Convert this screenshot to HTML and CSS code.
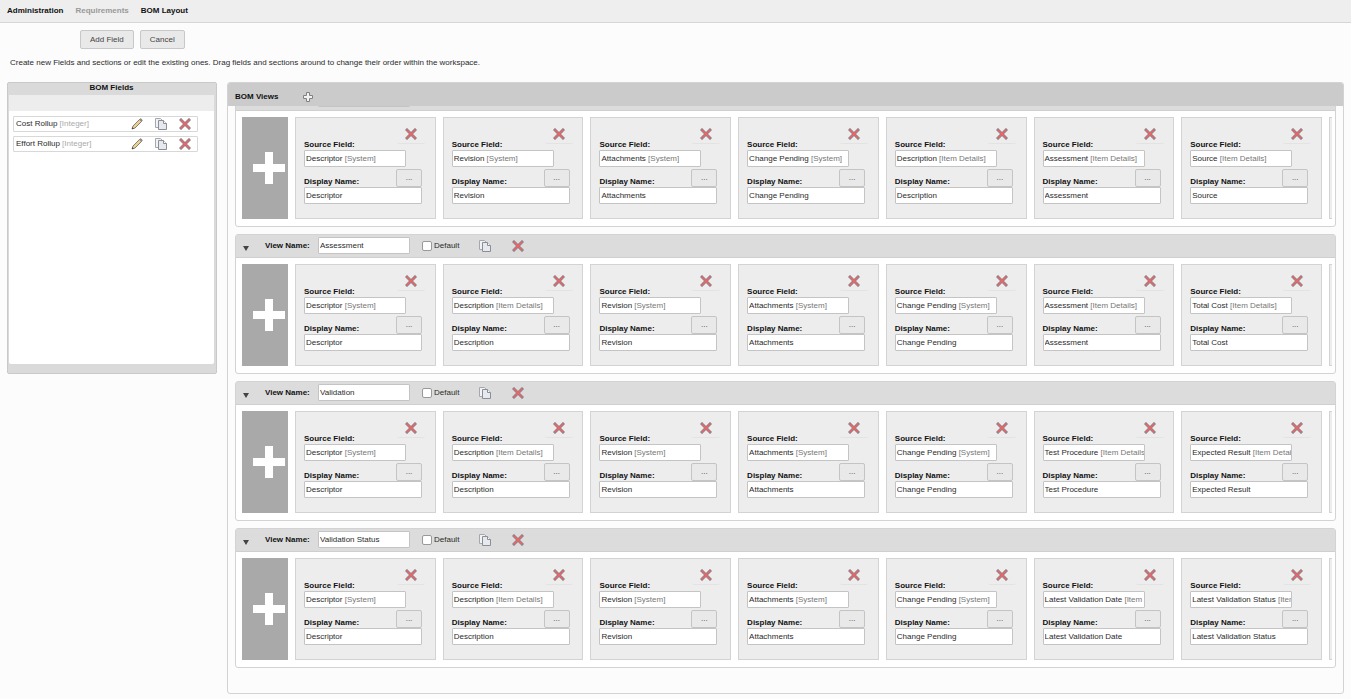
FILE: index.html
```html
<!DOCTYPE html>
<html lang="en">
<head>
    <meta charset="UTF-8">
    <meta name="viewport" content="width=device-width, initial-scale=1.0">
    <title>BOM Layout</title>
    <link rel="stylesheet" href="styles.css">
</head>

<body>
<svg class="icon-defs" aria-hidden="true">
    <symbol id="icon-delete" viewBox="0 0 12 12">
        <path d="M2 2L10 10M10 2L2 10" stroke="#85858b" stroke-width="3" stroke-linecap="square"/>
        <path d="M2 2L10 10M10 2L2 10" stroke="#ee6467" stroke-width="1.5" stroke-linecap="square"/>
    </symbol>
    <symbol id="icon-copy" viewBox="0 0 12 12">
        <path d="M0.5 0.5H5.5L7.5 2.5V9.5H0.5Z" fill="#f1f2f4" stroke="#a5a8ae"/>
        <path d="M3.5 2.5H8.5L11.5 5.5V11.5H3.5Z" fill="#e6e9ee" stroke="#8b8e96"/>
        <path d="M8.5 2.5V5.5H11.5" fill="#fff" stroke="#8b8e96"/>
    </symbol>
    <symbol id="icon-edit" viewBox="0 0 12 12">
        <path d="M1 11L2 8L8.8 1.2Q9.6 0.4 10.6 1.4Q11.6 2.4 10.8 3.2L4 10Z" fill="#ecd08e" stroke="#77736d" stroke-width="0.9"/>
        <path d="M8.2 1.8L10.2 3.8L10.9 3.1Q11.5 2.4 10.6 1.4Q9.6 0.5 8.9 1.1Z" fill="#8d8a92"/>
        <path d="M1 11L1.6 9.2L2.8 10.4Z" fill="#333"/>
    </symbol>
    <symbol id="icon-add" viewBox="0 0 12 12">
        <path d="M4.5 1.5H7.5V4.5H10.5V7.5H7.5V10.5H4.5V7.5H1.5V4.5H4.5Z" fill="#f2f2f2" stroke="#808080"/>
    </symbol>
</svg>

<nav class="breadcrumb">
    <a href="#">Administration</a>
    <a href="#" class="muted">Requirements</a>
    <a href="#">BOM Layout</a>
</nav>

<div class="actions">
    <button type="button" class="btn">Add Field</button>
    <button type="button" class="btn">Cancel</button>
</div>

<p class="hint">Create new Fields and sections or edit the existing ones. Drag fields and sections around to change their order within the workspace.</p>

<main class="workspace">
    <section class="fields-panel">
        <h2>BOM Fields</h2>
        <div class="fields-toolbar"></div>
        <ul class="fields-list" id="fields"></ul>
    </section>

    <section class="views-panel">
        <header class="views-header">
            <h2>BOM Views</h2>
            <button type="button" class="icon-btn" aria-label="Add view"><svg class="icon"><use href="#icon-add"/></svg></button>
        </header>
        <div class="views-list" id="views"></div>
    </section>
</main>

<script src="script.js"></script>
</body>
</html>
```
FILE: styles.css
```css
* {
    box-sizing: border-box;
    margin: 0;
    padding: 0;
}

body {
    background: #fcfcfc;
    color: #2b2b2b;
    font: 8px/10px "Liberation Sans", Arial, sans-serif;
}

h2 {
    font-size: 8px;
    line-height: 10px;
    color: #111;
}

button, input {
    font: inherit;
    color: inherit;
}

.icon-defs {
    position: absolute;
    width: 0;
    height: 0;
}

.icon {
    display: block;
    width: 12px;
    height: 12px;
    fill: none;
}

.breadcrumb {
    display: flex;
    align-items: center;
    gap: 12px;
    height: 23px;
    padding: 0 7px;
    background: #eee;
    border-bottom: 1px solid #d6d6d6;
}

.breadcrumb a {
    color: #111;
    font-weight: bold;
    text-decoration: none;
}

.breadcrumb .muted {
    color: #999;
}

.actions {
    display: flex;
    gap: 6px;
    padding: 7px 80px 0;
}

.btn {
    height: 19px;
    padding: 0 9px;
    background: #e9e9e9;
    border: 1px solid #c8c8c8;
    border-radius: 2px;
    color: #444;
}

.hint {
    padding: 9px 10px 14px;
}

.workspace {
    display: flex;
    align-items: flex-start;
    gap: 10px;
    padding: 0 7px;
}

.fields-panel {
    flex: none;
    width: 210px;
    padding: 0 2px 9px 1px;
    background: #dadada;
    border: 1px solid #c9c9c9;
    border-radius: 2px;
}

.fields-panel h2 {
    padding-bottom: 2px;
    text-align: center;
}

.fields-toolbar {
    height: 16px;
    background: #ededed;
}

.fields-list {
    height: 253px;
    padding: 5px 16px 0 4px;
    background: #fff;
    border-radius: 0 0 2px 2px;
    list-style: none;
}

.fields-list li {
    display: flex;
    align-items: center;
    gap: 12px;
    height: 16px;
    margin-bottom: 4px;
    padding: 0 6px 0 2px;
    border: 1px solid #d8d8d8;
    border-radius: 1px;
}

.field-name {
    flex: 1;
}

.field-name span {
    color: #aaa;
}

.views-panel {
    flex: 1;
    min-width: 0;
    display: flex;
    flex-direction: column;
    height: calc(100vh - 87px);
    border: 1px solid #d3d3d3;
    border-radius: 3px;
}

.views-header {
    display: flex;
    align-items: center;
    gap: 24px;
    height: 23px;
    padding: 4px 7px 0;
    background: #cbcbcb;
    border-radius: 2px 2px 0 0;
}

.icon-btn {
    background: none;
    border: none;
}

.views-list {
    flex: 1;
    min-height: 0;
    padding: 0 7px 26px;
    overflow-y: scroll;
    scrollbar-width: none;
}

.view {
    height: 140px;
    margin-bottom: 7px;
    background: #fff;
    border: 1px solid #d3d3d3;
    border-radius: 3px;
}

.view-header {
    display: flex;
    align-items: center;
    height: 23px;
    padding: 0 0 1px 7px;
    background: #dcdcdc;
    border-bottom: 1px solid #cfcfcf;
}

.toggle {
    width: 22px;
    height: 17px;
    padding-top: 6px;
    background: none;
    border: none;
}

.toggle::before {
    content: "";
    display: block;
    width: 0;
    border: 3px solid transparent;
    border-top: 5px solid #444;
    border-bottom: 0;
}

.view-name {
    flex: none;
    width: 53px;
    color: #111;
    font-weight: bold;
}

.text-input {
    height: 17px;
    padding: 0 1px;
    background: #fff;
    border: 1px solid #c4c4c4;
    border-radius: 1px;
}

.view-header .text-input {
    width: 92px;
}

.view-header input[type="checkbox"] {
    appearance: none;
    width: 10px;
    height: 10px;
    margin: 0 2px 0 12px;
    background: #fff;
    border: 1px solid #999;
    border-radius: 2px;
}

.default-label {
    width: 45px;
}

.view-header .icon-btn {
    margin: 1px 21px 0 0;
}

.view-body {
    display: flex;
    gap: 7px;
    height: 115px;
    margin-right: 3px;
    padding: 6px 0 7px 6px;
    overflow: hidden;
}

.add-column {
    flex: none;
    width: 46px;
    background: #a9a9a9;
    border: none;
}

.add-column svg {
    display: block;
    width: 32px;
    height: 32px;
    margin-left: 11px;
}

.columns {
    flex: 1;
    min-width: 0;
    display: grid;
    grid-auto-flow: column;
    grid-auto-columns: calc((100% - 52px) / 7);
    gap: 7px;
}

.column-card {
    padding-left: 8px;
    background: #ededed;
    border: 1px solid #d3d3d3;
}

.card-row {
    display: flex;
    justify-content: space-between;
    align-items: flex-end;
    width: 118px;
    height: 20px;
    color: #111;
    font-weight: bold;
}

.card-row.first {
    height: 32px;
}

.card-row .icon-btn {
    padding: 0 8px 3px;
    margin: 0 -3px 6px 0;
    border-bottom: 1px solid #e3e3e3;
    border-radius: 2px;
}

.source {
    width: 102px;
    height: 17px;
    padding: 0 1px;
    background: #fff;
    border: 1px solid #c4c4c4;
    border-radius: 1px;
    line-height: 16px;
    white-space: nowrap;
    overflow: hidden;
}

.source span {
    color: #777;
}

.more {
    width: 26px;
    height: 18px;
    background: #e9e9e9;
    border: 1px solid #c4c4c4;
    border-radius: 2px;
    color: #444;
    font-weight: normal;
}

.column-card .text-input {
    display: block;
    width: 118px;
}
```
FILE: script.js
```js
const fields = [
    ['Cost Rollup', 'Integer'],
    ['Effort Rollup', 'Integer']
];

const SYS = 'System';
const ITEM = 'Item Details';

const views = [
    {
        name: '',
        columns: [['Descriptor', SYS], ['Revision', SYS], ['Attachments', SYS], ['Change Pending', SYS], ['Description', ITEM], ['Assessment', ITEM], ['Source', ITEM]]
    },
    {
        name: 'Assessment',
        columns: [['Descriptor', SYS], ['Description', ITEM], ['Revision', SYS], ['Attachments', SYS], ['Change Pending', SYS], ['Assessment', ITEM], ['Total Cost', ITEM]]
    },
    {
        name: 'Validation',
        columns: [['Descriptor', SYS], ['Description', ITEM], ['Revision', SYS], ['Attachments', SYS], ['Change Pending', SYS], ['Test Procedure', ITEM], ['Expected Result', ITEM]]
    },
    {
        name: 'Validation Status',
        columns: [['Descriptor', SYS], ['Description', ITEM], ['Revision', SYS], ['Attachments', SYS], ['Change Pending', SYS], ['Latest Validation Date', ITEM], ['Latest Validation Status', ITEM]]
    }
];

const iconButton = (icon, label) =>
    `<button type="button" class="icon-btn" aria-label="${label}"><svg class="icon"><use href="#icon-${icon}"/></svg></button>`;

const columnCard = ([name, group], id) => `
    <div class="column-card">
        <div class="card-row first"><span>Source Field:</span>${iconButton('delete', 'Delete column')}</div>
        <div class="source">${name} <span>[${group}]</span></div>
        <div class="card-row"><label for="${id}">Display Name:</label><button type="button" class="more">...</button></div>
        <input type="text" class="text-input" id="${id}" value="${name}">
    </div>`;

const viewBlock = (view, i) => `
    <section class="view">
        <div class="view-header">
            <button type="button" class="toggle" aria-label="Collapse view"></button>
            <label class="view-name" for="view-${i}">View Name:</label>
            <input type="text" class="text-input" id="view-${i}" value="${view.name}">
            <input type="checkbox" id="default-${i}">
            <label class="default-label" for="default-${i}">Default</label>
            ${iconButton('copy', 'Copy view')}
            ${iconButton('delete', 'Delete view')}
        </div>
        <div class="view-body">
            <button type="button" class="add-column" aria-label="Add column">
                <svg viewBox="0 0 32 32"><path d="M12 0H20V12H32V20H20V32H12V20H0V12H12Z" fill="#fff"/></svg>
            </button>
            <div class="columns">
                ${view.columns.map((col, n) => columnCard(col, `col-${i}-${n}`)).join('')}
                <div class="column-card"></div>
            </div>
        </div>
    </section>`;

document.getElementById('fields').innerHTML = fields.map(([name, type]) => `
    <li>
        <div class="field-name">${name} <span>[${type}]</span></div>
        ${iconButton('edit', 'Edit field')}
        ${iconButton('copy', 'Copy field')}
        ${iconButton('delete', 'Delete field')}
    </li>`).join('');

const list = document.getElementById('views');
list.innerHTML = views.map(viewBlock).join('');

// open on the columns of the first view
list.scrollTop = 19;
```
